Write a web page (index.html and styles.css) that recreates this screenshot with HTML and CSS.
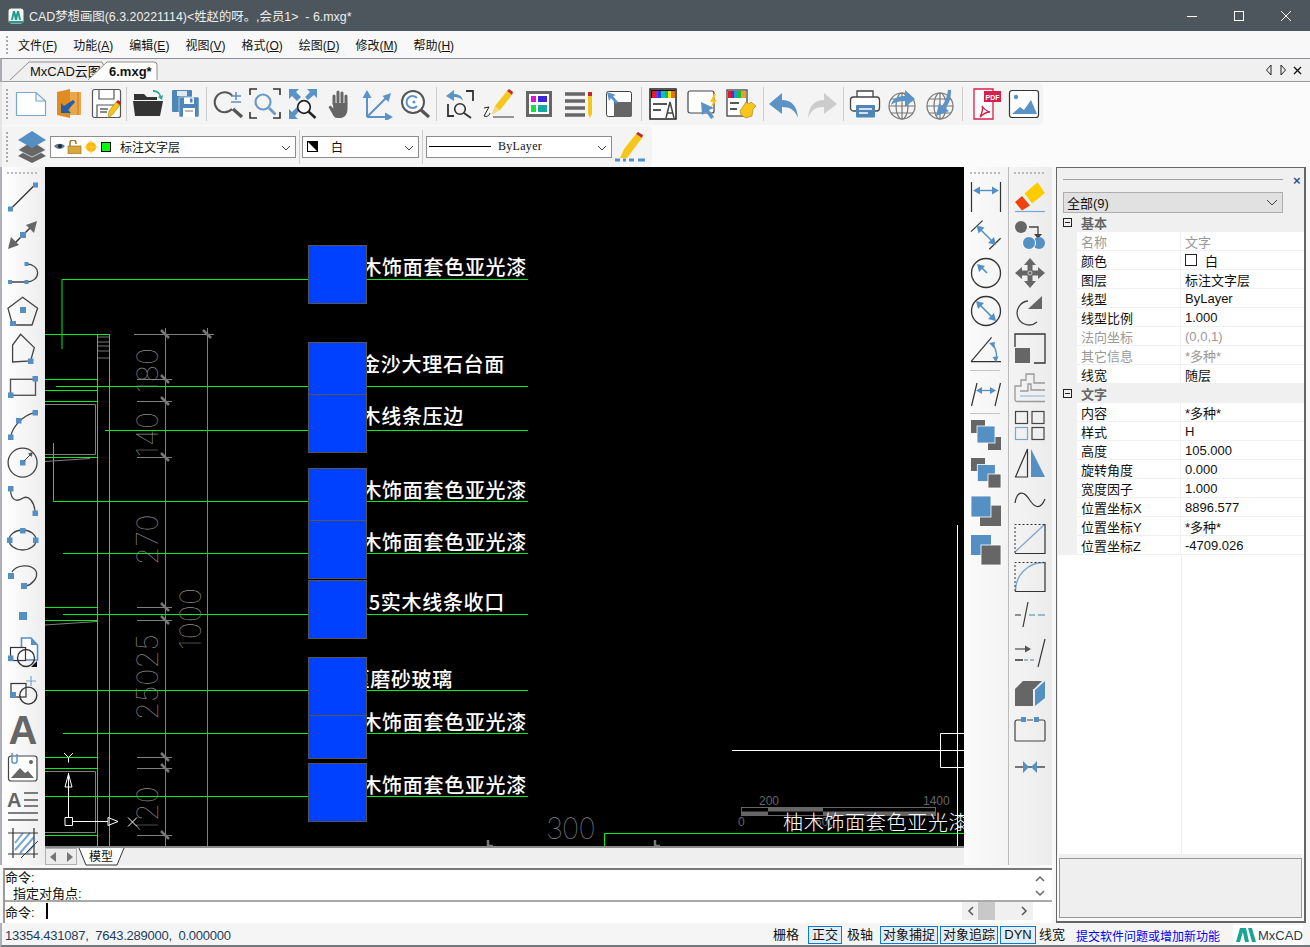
FILE: index.html
```html
<!DOCTYPE html>
<html lang="zh"><head><meta charset="utf-8"><title>CAD梦想画图</title><link rel="stylesheet" href="styles.css"></head>
<body>
<div class="app">
<header class="titlebar">
  <svg class="appicon" width="16" height="16" viewBox="0 0 16 16"><rect x=".5" y=".5" width="15" height="15" rx="3" fill="#f4f6f4"/><path d="M3 12L5 3h2l1 4 1-4h2l2 9h-2l-1-5-1 5H7L6 7l-1 5z" fill="#1e9c8c"/><path d="M1 13h14v2H1z" fill="#1e9c8c"/></svg>
  <span class="titletext">CAD梦想画图(6.3.20221114)&lt;姓赵的呀。,会员1&gt;  - 6.mxg*</span>
  <div class="winbtns">
    <svg width="12" height="12" viewBox="0 0 12 12"><path d="M1 6.500h10" stroke="#fff"/></svg>
    <svg width="12" height="12" viewBox="0 0 12 12"><rect x="1.500" y="1.500" width="9" height="9" fill="none" stroke="#fff"/></svg>
    <svg width="12" height="12" viewBox="0 0 12 12"><path d="M1 1l10 10M11 1L1 11" stroke="#fff" fill="none"/></svg>
  </div>
</header>
<nav class="menubar">
  <i class="vgrip"></i>
  <span>文件(<u>F</u>)</span><span>功能(<u>A</u>)</span><span>编辑(<u>E</u>)</span><span>视图(<u>V</u>)</span><span>格式(<u>O</u>)</span><span>绘图(<u>D</u>)</span><span>修改(<u>M</u>)</span><span>帮助(<u>H</u>)</span>
</nav>
<div class="tabstrip">
  <svg class="tabs" width="170" height="23" viewBox="0 0 170 23">
    <path d="M8 22L27 4H100L108 22" fill="#f0f0f0" stroke="#8f8f8f"/>
    <text x="28" y="18" class="tab-t">MxCAD云图</text>
    <path d="M86 22L105 4H152Q155 4 155 7V22" fill="#fff" stroke="#8f8f8f"/>
    <text x="107" y="18" class="tab-a">6.mxg*</text>
  </svg>
  <div class="tabnav">
    <svg width="8" height="12" viewBox="0 0 8 12"><path d="M6 1L1.500 6L6 11Z" fill="none" stroke="#222"/></svg>
    <svg width="8" height="12" viewBox="0 0 8 12"><path d="M2 1L6.500 6L2 11Z" fill="none" stroke="#222"/></svg>
    <svg width="9" height="12" viewBox="0 0 9 12"><path d="M1 3l7 7M8 3l-7 7" stroke="#111" stroke-width="1.300"/></svg>
  </div>
</div>
<section class="toolbars">
  <div class="tb tb1">
    <i class="vgrip"></i>
    <div class="grp g37">
      <span class="ic"><svg viewBox="0 0 32 32"><path d="M1.500 4.500H21L30.500 13V27.500H1.500Z M21 4.500V13H30.500" fill="#fff" stroke="#7aa6cf" stroke-width="1.200"/></svg></span>
      <span class="ic"><svg viewBox="0 0 32 32"><path d="M18 4H29V27H18Z" fill="#eaa64a"/><path d="M5 4L18 1V30L5 27Z" fill="#e08c24"/><path d="M26 4v23" stroke="#c97e20"/><path d="M21 12l2 2-7 8 3 3H9V15l3 3z" fill="#1d5fa8"/></svg></span>
      <span class="ic"><svg viewBox="0 0 32 32"><rect x="2.500" y="1.500" width="28" height="28" rx="2" fill="#fff" stroke="#555" stroke-width="1.200"/><path d="M9 2v9h15V2M7 30V17h17" fill="none" stroke="#555" stroke-width="1.200"/><path d="M10 21h8M10 24h7" stroke="#888" stroke-width="2"/><path d="M18 30l1-7 7-9 4 3-7 9z" fill="#f5c518" stroke="#8a7410" stroke-width=".5"/><path d="M26 14l2-2 3 2-1 3z" fill="#c82020"/></svg></span>
    </div><i class="sep"></i>
    <div class="grp g37">
      <span class="ic"><svg viewBox="0 0 32 32"><path d="M2 6h10l3 3h10v3H2z" fill="#333"/><path d="M1 13h30l-3 15H3z" fill="#333"/><path d="M21 2c4 0 7 2 8 6l2-1-1 5-4-3 1.500-.7C27 5 24 4 21 4z" fill="#2aa6a0"/></svg></span>
      <span class="ic"><svg viewBox="0 0 32 32"><rect x="3" y="2" width="20" height="22" rx="1" fill="#4e86b8"/><rect x="8" y="3" width="10" height="5" fill="#dfe9f2"/><rect x="10" y="9" width="20" height="20" rx="1" fill="#4e86b8" stroke="#f4f4f4" stroke-width=".6"/><rect x="15" y="9.500" width="10" height="6.500" fill="#fff"/><rect x="21" y="10.500" width="2.500" height="4" fill="#4e86b8"/><rect x="14" y="20" width="12" height="9" fill="#fff"/><path d="M16 23h8" stroke="#777"/></svg></span>
    </div><i class="sep"></i>
    <div class="grp g37">
      <span class="ic"><svg viewBox="0 0 32 32"><path d="M20.500 8A10 10 0 1 0 20 21" fill="none" stroke="#555" stroke-width="2"/><path d="M21 21l9 8" stroke="#555" stroke-width="3.200"/><path d="M24 4v8M19 8h10M19 14h10" stroke="#5b93c7" stroke-width="1.600"/></svg></span>
      <span class="ic"><svg viewBox="0 0 32 32"><path d="M1 7V1h7M24 1h7v6M1 24v6h7M24 30h7v-6" fill="none" stroke="#333" stroke-width="1.600"/><circle cx="14" cy="14" r="7.500" fill="none" stroke="#6a9ccb" stroke-width="2.200"/><path d="M20 20l6.500 6.500" stroke="#6a9ccb" stroke-width="2.800"/></svg></span>
      <span class="ic"><svg viewBox="0 0 32 32"><path d="M2 1h10L9 4l5 5-4 4-5-5-3 3zM30 1H20l3 3-5 5 3 3 6-5 3 3zM2 31V21l3 3 5-5 3 3-5 6 3 3z" fill="#5b93c7"/><circle cx="17" cy="19" r="6.300" fill="#fff" stroke="#222" stroke-width="1.700"/><path d="M21.500 23.500l7 6.500" stroke="#222" stroke-width="2.400"/></svg></span>
      <span class="ic"><svg viewBox="0 0 32 32"><path d="M10 15V8M14 14V4M18 14V5M22 15V8" stroke="#666" stroke-width="3" stroke-linecap="round"/><path d="M8.500 15h15v6c0 5-3 9-7 9h-3c-3 0-4-2-5-4l-4-7 2-1.500 3 3z" fill="#666"/></svg></span>
      <span class="ic"><svg viewBox="0 0 32 32"><path d="M5 29V8M5 29H25M5 29L24 10" stroke="#5b93c7" stroke-width="2" fill="none"/><path d="M5 2l4.500 8h-9zM31 29l-8 4.500v-9zM29 5l-2.500 9-6-6z" fill="#5b93c7"/></svg></span>
      <span class="ic"><svg viewBox="0 0 32 32"><circle cx="14" cy="14" r="11" fill="#fff" stroke="#555" stroke-width="2"/><path d="M18 10a6 6 0 1 0 0 8" fill="none" stroke="#5b93c7" stroke-width="2"/><circle cx="15" cy="14" r="1.500" fill="#5b93c7"/><path d="M22 22l8 7" stroke="#555" stroke-width="3.200"/></svg></span>
    </div><i class="sep"></i>
    <div class="grp g40">
      <span class="ic"><svg viewBox="0 0 32 32"><path d="M3 8l8-6v4c5 0 8 2 9 7-2-3-5-4-9-4v4z" fill="#5b93c7"/><path d="M5 16v12h6M23 3h7v10" fill="none" stroke="#333" stroke-width="1.800"/><circle cx="17" cy="21" r="5.300" fill="none" stroke="#333" stroke-width="1.600"/><path d="M21 25l7 5" stroke="#333" stroke-width="2"/></svg></span>
      <span class="ic"><svg viewBox="0 0 32 32"><path d="M9 26l3-8L24 3l5 4-12 15z" fill="#f7c61a"/><path d="M24 3l2-2 4 3-1 3z" fill="#c62828"/><path d="M9 26l3-8 5 4z" fill="#f3d98a"/><path d="M10 29H31" stroke="#555" stroke-width="1.200"/><path d="M1 20l5-1-5 9c3 1 5 0 6-3" fill="none" stroke="#222"/></svg></span>
      <span class="ic"><svg viewBox="0 0 32 32"><rect x="3" y="3" width="26" height="26" fill="#666"/><rect x="6" y="6" width="20" height="20" fill="#fff"/><rect x="8" y="8" width="5" height="6" fill="#e010d0"/><rect x="15" y="8" width="9" height="6" fill="#3b24e0"/><rect x="8" y="17" width="5" height="7" fill="#14e03a"/><rect x="15" y="17" width="9" height="7" fill="#13a8a0"/></svg></span>
      <span class="ic"><svg viewBox="0 0 32 32"><path d="M2 6h20M2 13h20M2 20h20M2 27h20" stroke="#666" stroke-width="3.500"/><path d="M25 8h4v18l-2 4-2-4z" fill="#f7c61a"/><rect x="25" y="4" width="4" height="4" fill="#c62828"/></svg></span>
      <span class="ic"><svg viewBox="0 0 32 32"><rect x="3.500" y="3.500" width="25" height="25" rx="2" fill="#fff" stroke="#444"/><path d="M11 14h18v13a2 2 0 0 1-2 2H11z" fill="#666"/><path d="M4 4l9 3-3 1 5 6-2 2-5-6-2 3z" fill="#5b93c7"/></svg></span>
    </div><i class="sep"></i>
    <div class="grp g39">
      <span class="ic"><svg viewBox="0 0 32 32"><rect x="3" y="1" width="26" height="30" fill="#fff" stroke="#111" stroke-width="1.400"/><path d="M4 2h24v8H4z" fill="#111"/><path d="M5 3h3v7H5z" fill="#e51a1a"/><path d="M8 3h3v7H8z" fill="#a020d0"/><path d="M11 3h3v7h-3z" fill="#2040e0"/><path d="M14 3h4v7h-4z" fill="#12c0c0"/><path d="M18 3h3v7h-3z" fill="#18c030"/><path d="M21 3h3v7h-3z" fill="#e8e020"/><path d="M24 3h4v7h-4z" fill="#e87010"/><path d="M6 16h14M6 22h8" stroke="#555" stroke-width="2"/><path d="M23 14l-4 16M23 14l4 16M20 25h6" stroke="#444" stroke-width="1.500"/></svg></span>
      <span class="ic"><svg viewBox="0 0 32 32"><rect x="2" y="3" width="26" height="22" rx="2" fill="#fff" stroke="#444" stroke-width="1.200"/><path d="M28 6l-4 8h3l-3 7 7-9h-3l2-6z" fill="#f7c61a"/><path d="M15 14l13 6-5 2 5 7-3 2-5-7-4 3z" fill="#5b93c7"/></svg></span>
      <span class="ic"><svg viewBox="0 0 32 32"><rect x="2" y="2" width="20" height="26" fill="#fff" stroke="#333" stroke-width="1.200"/><path d="M3 3h3v7H3z" fill="#e51a1a"/><path d="M6 3h3v7H6z" fill="#7020d0"/><path d="M9 3h3v7H9z" fill="#18a0d0"/><path d="M12 3h4v7h-4z" fill="#18c030"/><path d="M16 3h5v7h-5z" fill="#e8a020"/><path d="M5 15h9M5 21h7" stroke="#555" stroke-width="2"/><path d="M15 23l6-9 3 2 2-2 5 4-3 3-1 7-6 2-5-3z" fill="#f7c61a" stroke="#9a7c10" stroke-width=".6"/></svg></span>
    </div><i class="sep"></i>
    <div class="grp g38">
      <span class="ic"><svg viewBox="0 0 32 32"><path d="M1 16L14 5v7c9 0 15 5 16 18-3-8-8-11-16-11v7z" fill="#5b93c7"/></svg></span>
      <span class="ic"><svg viewBox="0 0 32 32"><path d="M31 16L18 5v7C9 12 3 17 2 30c3-8 8-11 16-11v7z" fill="#ccc"/></svg></span>
    </div><i class="sep"></i>
    <div class="grp g38">
      <span class="ic"><svg viewBox="0 0 32 32"><path d="M8 9V3h16v6" fill="#fff" stroke="#444" stroke-width="1.300"/><rect x="1.500" y="9" width="29" height="14" rx="3" fill="#fff" stroke="#444" stroke-width="1.300"/><rect x="7" y="17" width="19" height="12.500" rx="1" fill="#4e86b8"/><path d="M10 21h13M10 25h9" stroke="#fff" stroke-width="1.400"/></svg></span>
      <span class="ic"><svg viewBox="0 0 32 32"><g fill="none" stroke="#777" stroke-width="1.200"><circle cx="15" cy="18" r="13"/><ellipse cx="15" cy="18" rx="6" ry="13"/><path d="M2 18h26M4 11h22M4 25h22M15 5v26"/></g><path d="M4 17C6 10 11 8 18 8V2l10 9-10 8v-6c-6 0-10 1-14 4z" fill="#5b93c7"/></svg></span>
      <span class="ic"><svg viewBox="0 0 32 32"><g fill="none" stroke="#777" stroke-width="1.200"><circle cx="15" cy="18" r="13"/><ellipse cx="15" cy="18" rx="6" ry="13"/><path d="M2 18h26M4 11h22M4 25h22M15 5v26"/></g><path d="M26 2C26 11 24 16 20 20l4 3-13 5 3-13 3 3c3-4 5-9 6-16z" fill="#5b93c7"/></svg></span>
    </div><i class="sep"></i>
    <div class="grp g39">
      <span class="ic"><svg viewBox="0 0 32 32"><path d="M5 1h19v30H5z" fill="#fff" stroke="#d81e4a" stroke-width="1.300"/><rect x="15" y="3" width="17" height="11" fill="#d81e4a"/><text x="16.500" y="12" class="pdf-t">PDF</text><path d="M11 29c2-4 3-9 2-11 2 3 4 5 8 6-4 0-7 2-10 5z" fill="none" stroke="#d81e4a" stroke-width="1.300"/></svg></span>
      <span class="ic"><svg viewBox="0 0 32 32"><rect x="1.500" y="2.500" width="29" height="27" rx="2.500" fill="#fff" stroke="#333" stroke-width="1.200"/><circle cx="8" cy="9" r="2.200" fill="#5b93c7"/><path d="M4 26l8-7 4 3 7-10 6 14z" fill="#5b93c7"/></svg></span>
    </div>
  </div>
  <div class="tb tb2">
    <i class="vgrip"></i>
    <svg class="layers" width="32" height="34" viewBox="0 0 32 34"><path d="M16 17l14 9-14 7-14-7z" fill="#666"/><path d="M16 11l14 9-14 7-14-7z" fill="#666" stroke="#f4f4f4" stroke-width=".7"/><path d="M16 1l14 9-14 8-14-8z" fill="#5590c5"/></svg>
    <div class="combo c-layer">
      <svg width="60" height="14" viewBox="0 0 60 14"><path d="M1 6c3-3 8-3 11 0-3 4-8 4-11 0z" fill="#5a7a96"/><circle cx="7" cy="6" r="2" fill="#223"/><rect x="15" y="6" width="13" height="8" fill="#d8a83c" stroke="#8a6a20" stroke-width=".6"/><path d="M17 6V3a3 3 0 0 1 6 0v1" fill="none" stroke="#a07a20" stroke-width="1.500"/><circle cx="38" cy="7" r="5" fill="#ffb400"/><path d="M38 0v14M31 7h14" stroke="#ffcf40"/><rect x="48.500" y="2.500" width="9" height="9" fill="#00ff00" stroke="#000"/></svg>
      <span class="c-text">标注文字层</span><svg class="chev" width="10" height="6" viewBox="0 0 10 6"><path d="M1 1l4 4 4-4" fill="none" stroke="#444"/></svg>
    </div><i class="sep sep2"></i>
    <div class="combo c-color">
      <svg width="11" height="11" viewBox="0 0 11 11"><rect x=".5" y=".5" width="10" height="10" fill="#fff" stroke="#000"/><path d="M0 0h11v11z" fill="#000"/></svg>
      <span class="c-text">白</span><svg class="chev" width="10" height="6" viewBox="0 0 10 6"><path d="M1 1l4 4 4-4" fill="none" stroke="#444"/></svg>
    </div><i class="sep sep3"></i>
    <div class="combo c-line">
      <i class="ltline"></i><span class="c-mono">ByLayer</span><svg class="chev" width="10" height="6" viewBox="0 0 10 6"><path d="M1 1l4 4 4-4" fill="none" stroke="#444"/></svg>
    </div>
    <svg class="pencil2" width="32" height="32" viewBox="0 0 32 32"><path d="M6 27l4-9L22 3l6 4-15 20z" fill="#f7c61a"/><path d="M22 3l2-2 5 3-1 3z" fill="#c62828"/><path d="M1 29h5M9 29h3M15 29h5M24 29h7" stroke="#5590c5" stroke-width="3"/></svg>
  </div>
</section>
<main class="body">
  <div class="leftcol">
    <div class="work">
      <aside class="tool-left">
        <i class="hgrip"></i>
        <span class="lic"><svg viewBox="0 0 32 32"><path d="M3.600 28L28 3.700" stroke="#333" stroke-width="1.300"/><rect x="26" y="1.500" width="5" height="5" fill="#5590c5"/><rect x="1" y="25.500" width="5" height="5" fill="#5590c5"/></svg></span>
        <span class="lic"><svg viewBox="0 0 32 32"><path d="M7 25L26 6" stroke="#333" stroke-width="1.500"/><path d="M30 2l-3 12-8-8zM1 30l3-12 8 8z" fill="#666"/><rect x="13" y="13" width="6" height="6" fill="#5590c5"/></svg></span>
        <span class="lic"><svg viewBox="0 0 32 32"><path d="M3 25H19.600C26 25 30.600 21 30.600 16S26 7 19.600 7" fill="none" stroke="#444" stroke-width="1.300"/><rect x="1" y="23" width="4" height="4" fill="#5590c5"/><rect x="17.500" y="23" width="4" height="4" fill="#5590c5"/><rect x="17.500" y="5" width="4" height="4" fill="#5590c5"/></svg></span>
        <span class="lic"><svg viewBox="0 0 32 32"><path d="M15.600 2.300L30.600 13.300L25 30H5.600L1 13.300Z" fill="none" stroke="#444" stroke-width="1.300"/><rect x="13" y="12" width="6" height="6" fill="#5590c5"/><rect x="3" y="26" width="6" height="5" fill="#5590c5"/></svg></span>
        <span class="lic"><svg viewBox="0 0 32 32"><path d="M13.600 1.300L27.300 14.600L23.600 28L5.600 29V12Z" fill="none" stroke="#444" stroke-width="1.300"/><rect x="21" y="25.500" width="5.500" height="5.500" fill="#5590c5"/></svg></span>
        <span class="lic"><svg viewBox="0 0 32 32"><rect x="3.500" y="8.300" width="25" height="16" fill="none" stroke="#555" stroke-width="1.400"/><rect x="25.500" y="5" width="5.500" height="5.500" fill="#5590c5"/><rect x="1" y="21.500" width="5.500" height="5.500" fill="#5590c5"/></svg></span>
        <span class="lic"><svg viewBox="0 0 32 32"><path d="M3.600 28C5 19 15 6 28 3.600" fill="none" stroke="#444" stroke-width="1.300"/><rect x="25.500" y="1" width="5.500" height="5.500" fill="#5590c5"/><rect x="9" y="9" width="5.500" height="5.500" fill="#5590c5"/><rect x="1" y="25.500" width="5.500" height="5.500" fill="#5590c5"/></svg></span>
        <span class="lic"><svg viewBox="0 0 32 32"><circle cx="15.600" cy="15.600" r="14.500" fill="none" stroke="#444" stroke-width="1.300"/><rect x="13" y="13" width="5.500" height="5.500" fill="#5590c5"/><path d="M17 14l7-7" stroke="#444"/><path d="M26 5l-1.500 5-3.500-3.500z" fill="#555"/></svg></span>
        <span class="lic"><svg viewBox="0 0 32 32"><path d="M3.600 5C4 18 12 16 16 13C22 10 27 17 28 26" fill="none" stroke="#444" stroke-width="1.300"/><rect x="1" y="1" width="5.500" height="5.500" fill="#5590c5"/><rect x="25.500" y="25.500" width="5.500" height="5.500" fill="#5590c5"/></svg></span>
        <span class="lic"><svg viewBox="0 0 32 32"><ellipse cx="15.600" cy="17" rx="13.500" ry="10" fill="none" stroke="#444" stroke-width="1.300"/><rect x="13" y="5" width="5.500" height="5.500" fill="#5590c5"/><rect x="0" y="14.500" width="5.500" height="5.500" fill="#5590c5"/><rect x="26" y="14.500" width="5.500" height="5.500" fill="#5590c5"/></svg></span>
        <span class="lic"><svg viewBox="0 0 32 32"><path d="M5 11C9 4 24 2 29 10C32 17 24 24 19 25" fill="none" stroke="#444" stroke-width="1.300"/><rect x="1" y="12" width="6" height="6" fill="#5590c5"/><rect x="14" y="22" width="6" height="6" fill="#5590c5"/></svg></span>
        <span class="lic"><svg viewBox="0 0 32 32"><rect x="12" y="13" width="8" height="8" fill="#5590c5"/></svg></span>
        <span class="lic"><svg viewBox="0 0 32 32"><path d="M14.500 1H24l6.500 7v15h-16z" fill="#fff" stroke="#5590c5" stroke-width="1.600"/><path d="M24 1v7h6.500z" fill="#5590c5"/><rect x="3.500" y="10.500" width="15" height="13" fill="#fff" stroke="#333" stroke-width="1.200"/><circle cx="19" cy="21" r="8.500" fill="none" stroke="#333" stroke-width="1.400"/><rect x="1" y="18.500" width="5.500" height="5.500" fill="#5590c5"/><path d="M24 30l6-6v6z" fill="#111"/></svg></span>
        <span class="lic"><svg viewBox="0 0 32 32"><rect x="4" y="8.500" width="15" height="13.500" fill="none" stroke="#333" stroke-width="1.200"/><circle cx="21.300" cy="20.600" r="8.500" fill="none" stroke="#333" stroke-width="1.400"/><rect x="3" y="17" width="6" height="6" fill="#5590c5"/><path d="M24 1v10M19 6h10" stroke="#7aa6cf" stroke-width="1.200"/></svg></span>
        <span class="lic"><svg viewBox="0 0 32 32"><text x="16" y="31" class="big-a">A</text></svg></span>
        <span class="lic"><svg viewBox="0 0 32 32"><rect x="1.500" y="5" width="28.500" height="25" rx="2.500" fill="#fff" stroke="#444" stroke-width="1.200"/><path d="M4 27l9-10 5 5 3-2 6 7z" fill="#666"/><circle cx="24" cy="11" r="2" fill="#666"/><path d="M5 2v8c0 3 5 3 5 0V3" fill="none" stroke="#5590c5" stroke-width="1.400"/></svg></span>
        <span class="lic"><svg viewBox="0 0 32 32"><text x="0" y="18" class="mid-a">A</text><path d="M17 4h14M17 11h14M17 17h14M1 24h30M1 31h30" stroke="#555" stroke-width="1.400"/></svg></span>
        <span class="lic"><svg viewBox="0 0 32 32"><path d="M7 5h20v22H7z" fill="#fff"/><path d="M8 16l8-10M8 23l15-17M13 26l14-16M20 26l7-8" stroke="#7aa6cf" stroke-width="2"/><path d="M1 6h30M1 27h30M6 1v30M27 1v30" stroke="#333" stroke-width="1.200"/><path d="M14 31L31 14" stroke="#333"/></svg></span>
      </aside>
      <div class="canvaswrap">
        <svg class="cad" width="919" height="679" viewBox="45 167 919 679" aria-label="CAD drawing">
          <g class="green">
            <path d="M62 349V279.500H528M45 334.500H109M97.500 334V846M109.500 334V846M45 379.500H97M56 386.500H528M45 390.500H97M45 401.500H97M105 430.500H528M45 457.500H97M53.500 443V501.500H528M63 553.500H528M45 607.500H97M63 614.500H528M45 620.500H97M45 690.500H528M63 733.500H528M45 757.500H97M45 768.500H97M45 796.500H528M45 835.500H97M604.500 846V833.500H964"/>
            <path d="M98 337h11M98 342h11M98 346h11M98 351h11M98 358h11" class="thin"/>
          </g>
          <g class="gray">
            <path d="M165.500 328V846M207.500 328V846M134 334.500H214M137 379.500H172M137 401.500H172M137 457.500H172M137 607.500H172M137 620.500H172M137 757.500H172M137 768.500H172M137 835.500H172M45 404.500H95.500V454.500H45M45 771.500H95.500V832.500H45M45 461.500L90 458.500M45 625L97 621.500"/>
          </g>
          <g class="ticks">
            <path d="M161 330l8 8M203 330l8 8M161 375l8 8M161 397l8 8M161 453l8 8M161 603l8 8M161 616l8 8M161 753l8 8M161 764l8 8M161 831l8 8"/>
            <path d="M488 840v6h5M655 840v6h5"/>
          </g>
          <g class="dim">
            <text transform="translate(158,393) rotate(-90)">180</text>
            <text transform="translate(158,457) rotate(-90)">140</text>
            <text transform="translate(158,565) rotate(-90)">270</text>
            <text transform="translate(158,720) rotate(-90)">25025</text>
            <text transform="translate(158,832) rotate(-90)">120</text>
            <text transform="translate(201,650) rotate(-90)">1000</text>
            <text x="546" y="839" class="d300">300</text>
          </g>
          <g class="label">
            <text x="527" y="275">柚木饰面套色亚光漆</text>
            <text x="505" y="372">金沙大理石台面</text>
            <text x="464" y="424">实木线条压边</text>
            <text x="527" y="498">柚木饰面套色亚光漆</text>
            <text x="527" y="550">柚木饰面套色亚光漆</text>
            <text x="505" y="610">25实木线条收口</text>
            <text x="453" y="687">厘磨砂玻璃</text>
            <text x="527" y="730">柚木饰面套色亚光漆</text>
            <text x="527" y="793">柚木饰面套色亚光漆</text>
          </g>
          <g class="blue">
            <rect x="308.500" y="245.500" width="58" height="58"/>
            <rect x="308.500" y="342.500" width="58" height="58"/>
            <rect x="308.500" y="394.500" width="58" height="58"/>
            <rect x="308.500" y="468.500" width="58" height="58"/>
            <rect x="308.500" y="520.500" width="58" height="58"/>
            <rect x="308.500" y="580.500" width="58" height="58"/>
            <rect x="308.500" y="700.500" width="58" height="58"/>
            <rect x="308.500" y="657.500" width="58" height="58"/>
            <rect x="308.500" y="763.500" width="58" height="58"/>
          </g>
          <g class="white">
            <path d="M732 750.500H964M940.500 733.500V767.500H964M940.500 733.500H964M957.500 525V846"/>
            <path d="M68.500 817V773M72 821.500H108M65 817.500h7.500v8H65z"/>
            <path d="M65 787h7l-3.500-13zM108 817.500v8l10-4z"/>
            <path d="M64 753l4.500 4.500v5M73 753l-4.500 4.500M128 817.500l9 9M137 817.500l-9 9"/>
          </g>
          <g class="scale">
            <rect x="741.500" y="807.500" width="194" height="8"/>
            <path d="M741 811.500h27v4h-27zM768 807.500h55v4h-55zM823 811.500h112v4H823z" class="fill"/>
            <text x="759" y="805">200</text><text x="923" y="805">1400</text><text x="738" y="826">0</text><text x="815" y="826">600</text>
          </g>
          <text x="783" y="830" class="label2">柚木饰面套色亚光漆</text>
        </svg>
        <div class="modelbar">
          <div class="navbtns">
            <svg width="15" height="16" viewBox="0 0 15 16"><path d="M10 3v10L4 8z" fill="#777"/></svg><svg width="15" height="16" viewBox="0 0 15 16"><path d="M5 3v10l6-5z" fill="#777"/></svg>
          </div>
          <svg class="modeltab" width="50" height="19" viewBox="0 0 50 19"><path d="M1 0L8 17H39L46 0" fill="#fff" stroke="#333"/><text x="11" y="13" class="model-t">模型</text></svg>
        </div>
      </div>
      <aside class="tool-right">
        <div class="rcol">
          <i class="hgrip"></i>
          <span class="lic"><svg viewBox="0 0 32 32"><path d="M1.500 1v30M30.500 1v30" stroke="#333" stroke-width="1.200"/><path d="M7 9.500h18" stroke="#5590c5" stroke-width="1.400"/><path d="M3 9.500l7-4v8zM29 9.500l-7-4v8z" fill="#5590c5"/></svg></span>
          <span class="lic"><svg viewBox="0 0 32 32"><path d="M1 12.600L12.600 1.600M19.300 30.300L30.600 19.300" stroke="#333" stroke-width="1.200"/><path d="M10 10l13 13" stroke="#5590c5" stroke-width="1.500"/><path d="M6.500 6.500l8 2-6 6zM26 26l-8-2 6-6z" fill="#5590c5"/></svg></span>
          <span class="lic"><svg viewBox="0 0 32 32"><circle cx="16" cy="16" r="14.500" fill="none" stroke="#333" stroke-width="1.300"/><path d="M17 16l-7-7" stroke="#5590c5" stroke-width="1.700"/><path d="M7 7l8 2-6 6z" fill="#5590c5"/></svg></span>
          <span class="lic"><svg viewBox="0 0 32 32"><circle cx="16" cy="16" r="14.500" fill="none" stroke="#333" stroke-width="1.300"/><path d="M9 9l14 14" stroke="#5590c5" stroke-width="1.700"/><path d="M6 6l8 2-6 6zM26 26l-8-2 6-6z" fill="#5590c5"/></svg></span>
          <span class="lic"><svg viewBox="0 0 32 32"><path d="M1 28.600H31M1 28.600L21.600 4.400" fill="none" stroke="#333" stroke-width="1.200"/><path d="M22 10c3 4 5 8 4.500 15" fill="none" stroke="#5590c5" stroke-width="1.300"/><path d="M19 10l6-1-1 6zM26 29l-3.500-5 6-.5z" fill="#5590c5"/></svg></span>
          <i class="hsep"></i>
          <span class="lic"><svg viewBox="0 0 32 32"><path d="M1.500 30L7 7M25 30L30.500 7" stroke="#333" stroke-width="1.200"/><path d="M9 14.500h14" stroke="#5590c5" stroke-width="1.300"/><path d="M6 14.500l6-3.500v7zM26 14.500l-6-3.500v7z" fill="#5590c5"/></svg></span>
          <i class="hsep"></i>
          <span class="lic"><svg viewBox="0 0 32 32"><rect x="1" y="1" width="14" height="13" fill="#666"/><rect x="18" y="18" width="13" height="13" fill="#666"/><rect x="7" y="7" width="18" height="17" fill="#5590c5" stroke="#fff" stroke-width=".8"/></svg></span>
          <span class="lic"><svg viewBox="0 0 32 32"><rect x="1" y="1" width="14" height="13" fill="#666"/><rect x="7.300" y="7.600" width="18" height="17" fill="#5590c5" stroke="#fff" stroke-width=".8"/><rect x="18" y="17" width="13" height="14" fill="#666" stroke="#fff" stroke-width=".8"/></svg></span>
          <span class="lic"><svg viewBox="0 0 32 32"><rect x="10" y="10.600" width="21" height="20.400" fill="#666"/><rect x="1" y="1" width="20" height="21" fill="#5590c5" stroke="#fff" stroke-width=".8"/></svg></span>
          <span class="lic"><svg viewBox="0 0 32 32"><rect x="1" y="2" width="20" height="20" fill="#5590c5"/><rect x="11" y="12" width="20" height="20" fill="#666" stroke="#fff" stroke-width=".8"/></svg></span>
        </div>
        <div class="rcol rcol2">
          <i class="hgrip"></i>
          <span class="lic"><svg viewBox="0 0 32 32"><path d="M10.500 12.500L23.500 1.300L31 12L18 22.500Z" fill="#ffcc00"/><path d="M8 15L16 24.500L8 29.500L1 21Z" fill="#f0420c"/><path d="M1 30.500H31" stroke="#7aa6cf" stroke-width="1.200"/></svg></span>
          <span class="lic"><svg viewBox="0 0 32 32"><circle cx="7" cy="8" r="6" fill="#666"/><path d="M15 8h9v8" fill="none" stroke="#444" stroke-width="1.300"/><path d="M24 20l-4-5h8z" fill="#444"/><circle cx="25" cy="24" r="6" fill="#5590c5"/><circle cx="15" cy="24" r="6.500" fill="#5590c5" stroke="#fff"/></svg></span>
          <span class="lic"><svg viewBox="0 0 32 32"><path d="M16 1l6 7h-3.500v5.500H24V10l7 6-7 6v-3.500h-5.500V24H22l-6 7-6-7h3.500v-5.500H8V22l-7-6 7-6v3.500h5.500V8H10z" fill="#666"/><circle cx="16" cy="16" r="2" fill="none" stroke="#ccc"/></svg></span>
          <span class="lic"><svg viewBox="0 0 32 32"><path d="M23 27A12 12 0 1 1 14 6" fill="none" stroke="#444" stroke-width="1.300"/><path d="M28 1v13H14z" fill="#666"/></svg></span>
          <span class="lic"><svg viewBox="0 0 32 32"><path d="M1 14V1H31V30H20" fill="none" stroke="#333" stroke-width="1.300"/><rect x="1" y="15" width="15" height="15" fill="#666"/></svg></span>
          <span class="lic"><svg viewBox="0 0 32 32"><path d="M1 29V15h6V9h5V3h8v9h11M6 20h8v-7h3v6h14M1 29c0 1 1 1.500 2 1.500H31" fill="none" stroke="#999" stroke-width="1.300"/><path d="M6 25h25" stroke="#bcd0e4" stroke-width="2"/></svg></span>
          <span class="lic"><svg viewBox="0 0 32 32"><g fill="none" stroke-width="1.200"><rect x="1.500" y="2.500" width="12" height="12" stroke="#444"/><rect x="18" y="2.500" width="12" height="12" stroke="#444"/><rect x="1.500" y="18.500" width="12" height="12" stroke="#7aa6cf"/><rect x="18" y="18.500" width="12" height="12" stroke="#444"/></g></svg></span>
          <span class="lic"><svg viewBox="0 0 32 32"><path d="M1.500 30H13.500V2Z" fill="none" stroke="#333" stroke-width="1.200"/><path d="M17 2V30H31Z" fill="#5590c5"/></svg></span>
          <span class="lic"><svg viewBox="0 0 32 32"><path d="M1 18C3 5 10 6 15 14S26 26 31 14" fill="none" stroke="#333" stroke-width="1.200"/></svg></span>
          <span class="lic"><svg viewBox="0 0 32 32"><path d="M1 29L31 1" stroke="#7aa6cf" stroke-width="1.300"/><path d="M1 30.500H31V1" fill="none" stroke="#333" stroke-width="1.200"/><path d="M1 30V1.500H31" fill="none" stroke="#333" stroke-dasharray="2 2"/></svg></span>
          <span class="lic"><svg viewBox="0 0 32 32"><path d="M1.500 30C1.500 14 14 1.500 30 1.500" fill="none" stroke="#7aa6cf" stroke-width="1.300"/><path d="M1 30.500H31V1" fill="none" stroke="#333" stroke-width="1.200"/><path d="M1 30V1.500H31" fill="none" stroke="#333" stroke-dasharray="2 2"/></svg></span>
          <span class="lic"><svg viewBox="0 0 32 32"><path d="M1 16H7M9 28L14 3" stroke="#333" stroke-width="1.200"/><path d="M15 16h6M24 16h7" stroke="#7aa6cf" stroke-width="1.500"/></svg></span>
          <span class="lic"><svg viewBox="0 0 32 32"><path d="M1 12H15" stroke="#555" stroke-width="1.300"/><path d="M17 12l-6-3.500v7z" fill="#555"/><path d="M1 23h8" stroke="#333" stroke-width="1.500"/><path d="M10 23h12" stroke="#7aa6cf" stroke-width="1.500" stroke-dasharray="4 2"/><path d="M24 30L31 2" stroke="#333" stroke-width="1.200"/></svg></span>
          <span class="lic"><svg viewBox="0 0 32 32"><path d="M1 14L9 6H28L20 14Z" fill="#666"/><rect x="1" y="14" width="18" height="17" fill="#666"/><path d="M21 15L31 6V23L21 31Z" fill="#5590c5"/></svg></span>
          <span class="lic"><svg viewBox="0 0 32 32"><path d="M7 7H3a2 2 0 0 0-2 2V27a1 1 0 0 0 1 1H30a1 1 0 0 0 1-1V9a2 2 0 0 0-2-2H25M13 7h6" fill="none" stroke="#444" stroke-width="1.200"/><rect x="7" y="4" width="5" height="5" fill="#5590c5"/><rect x="20" y="4" width="5" height="5" fill="#5590c5"/></svg></span>
          <span class="lic"><svg viewBox="0 0 32 32"><path d="M1 16H31" stroke="#333" stroke-width="1.300"/><path d="M9 10v12l6-6zM23 10v12l-6-6z" fill="#5590c5"/></svg></span>
        </div>
      </aside>
    </div>
    <section class="cmd">
      <div class="cmdlog">
        <div class="cmdtext"><div>命令:</div><div class="ind">指定对角点:</div></div>
        <div class="vscroll">
          <svg width="12" height="8" viewBox="0 0 12 8"><path d="M2 6l4-4 4 4" fill="none" stroke="#666" stroke-width="1.500"/></svg>
          <svg width="12" height="8" viewBox="0 0 12 8"><path d="M2 2l4 4 4-4" fill="none" stroke="#666" stroke-width="1.500"/></svg>
        </div>
      </div>
      <div class="cmdinput">
        <span>命令:</span><i class="cursor"></i>
        <div class="hscroll">
          <svg width="10" height="10" viewBox="0 0 10 10"><path d="M7 1L3 5l4 4" fill="none" stroke="#555" stroke-width="1.500"/></svg>
          <i class="thumb"></i>
          <svg width="10" height="10" viewBox="0 0 10 10"><path d="M3 1l4 4-4 4" fill="none" stroke="#555" stroke-width="1.500"/></svg>
        </div>
      </div>
    </section>
  </div>
  <aside class="props">
    <div class="ptop"><i class="pline"></i><span class="pclose">×</span></div>
    <div class="pcombo"><span>全部(9)</span><svg width="12" height="7" viewBox="0 0 12 7"><path d="M1 1l5 5 5-5" fill="none" stroke="#444"/></svg></div>
    <div class="ptable">
      <div class="pgroup"><i class="minus"></i><span>基本</span></div>
      <div class="prow dis"><span class="k">名称</span><span class="v">文字</span></div>
      <div class="prow"><span class="k">颜色</span><span class="v"><i class="swatch"></i>白</span></div>
      <div class="prow"><span class="k">图层</span><span class="v">标注文字层</span></div>
      <div class="prow"><span class="k">线型</span><span class="v">ByLayer</span></div>
      <div class="prow"><span class="k">线型比例</span><span class="v">1.000</span></div>
      <div class="prow dis"><span class="k">法向坐标</span><span class="v">(0,0,1)</span></div>
      <div class="prow dis"><span class="k">其它信息</span><span class="v">*多种*</span></div>
      <div class="prow"><span class="k">线宽</span><span class="v">随层</span></div>
      <div class="pgroup"><i class="minus"></i><span>文字</span></div>
      <div class="prow"><span class="k">内容</span><span class="v">*多种*</span></div>
      <div class="prow"><span class="k">样式</span><span class="v">H</span></div>
      <div class="prow"><span class="k">高度</span><span class="v">105.000</span></div>
      <div class="prow"><span class="k">旋转角度</span><span class="v">0.000</span></div>
      <div class="prow"><span class="k">宽度因子</span><span class="v">1.000</span></div>
      <div class="prow"><span class="k">位置坐标X</span><span class="v">8896.577</span></div>
      <div class="prow"><span class="k">位置坐标Y</span><span class="v">*多种*</span></div>
      <div class="prow"><span class="k">位置坐标Z</span><span class="v">-4709.026</span></div>
      <div class="pfill"></div>
    </div>
    <div class="pdesc"><div class="pdescbox"></div></div>
  </aside>
</main>
<footer class="status">
  <span class="coords">13354.431087,&nbsp; 7643.289000,&nbsp; 0.000000</span>
  <span class="st st1">栅格</span>
  <span class="st on st2">正交</span>
  <span class="st st3">极轴</span>
  <span class="st on st4">对象捕捉</span>
  <span class="st on st5">对象追踪</span>
  <span class="st on st6">DYN</span>
  <span class="st st7">线宽</span>
  <span class="link">提交软件问题或增加新功能</span>
  <span class="brand"><svg width="20" height="16" viewBox="0 0 20 16"><path d="M0 15L4 1h4L4 15zM6 1h4l3 14H9zM12 1h4l4 14h-4z" fill="#1aa595"/></svg>MxCAD</span>
</footer>
</div>
</body></html>
```
FILE: styles.css
```css
* { box-sizing: border-box; }
html, body { margin: 0; padding: 0; }
body { font-family: "Liberation Sans", "Noto Sans CJK SC", sans-serif; font-size: 13px; color: #111; overflow: hidden; }
i { display: block; font-style: normal; }
svg { display: block; flex: none; }
.app { width: 1310px; height: 947px; display: flex; flex-direction: column; background: #f8f8f8; overflow: hidden; }

.titlebar { height: 31px; background: #4d565c; color: #eee; display: flex; align-items: center; padding-left: 8px; }
.appicon { margin-right: 5px; }
.titletext { font-size: 12.4px; white-space: pre; }
.winbtns { margin-left: auto; display: flex; gap: 35px; padding-right: 18px; }

.menubar { height: 27px; font-size: 12px; background: #f8f8f8; display: flex; align-items: center; padding-left: 6px; gap: 16px; }
.menubar .vgrip { height: 18px; margin-right: -6px; }
.menubar span { white-space: nowrap; }
.vgrip { width: 2px; height: 30px; background: repeating-linear-gradient(to bottom, #aaa 0 2px, transparent 2px 4px); }

.tabstrip { height: 24px; background: #f0f0f0; border-top: 1px solid #8c8c9c; border-bottom: 1px solid #9a9a9a; border-left: 2px solid #a9adb3; display: flex; align-items: flex-end; justify-content: space-between; }
.tab-t { font: 13px "Liberation Sans", "Noto Sans CJK SC", sans-serif; fill: #111; }
.tab-a { font: 700 13px "Liberation Sans", "Noto Sans CJK SC", sans-serif; fill: #111; }
.tabnav { display: flex; gap: 6px; align-self: center; padding-right: 8px; }

.toolbars { height: 85px; background: #fbfbfb; border-left: 2px solid #e4e4e4; }
.tb { display: flex; align-items: center; background: #f4f4f4; border-radius: 0 4px 4px 0; }
.tb1 { width: 1041px; height: 42px; margin-top: 1px; padding-left: 4px; }
.tb2 { width: 650px; height: 41px; margin-top: 1px; padding-left: 4px; }
.tb1 > .vgrip { margin-right: 4px; }
.grp { display: flex; }
.ic { display: flex; justify-content: center; }
.ic svg { width: 32px; height: 32px; }
.g37 .ic { width: 37.5px; }
.g38 .ic { width: 38px; }
.g39 .ic { width: 39px; }
.g40 .ic { width: 40px; }
.sep { width: 5px; height: 34px; background: linear-gradient(#ccc, #ccc) center / 1px 100% no-repeat; }
.sep2 { width: 6px; }
.sep3 { width: 7px; }
.layers { margin-left: 8px; margin-right: 2px; }
.combo { height: 22px; background: #fff; border: 1px solid #8d8d8d; display: flex; align-items: center; position: relative; padding-left: 2px; }
.chev { position: absolute; right: 4px; top: 8px; }
.c-layer { width: 246px; }
.c-text { margin-left: 7px; font-size: 12px; }
.c-color { width: 117px; padding-left: 4px; }
.c-color .c-text { margin-left: 13px; }
.c-line { width: 186px; }
.ltline { width: 62px; height: 1px; background: #000; margin-right: 7px; }
.c-mono { font: 12px "Liberation Serif", serif; letter-spacing: .3px; }
.pencil2 { margin-left: 2px; }

.body { height: 756px; display: flex; background: #f8f8f8; }
.leftcol { width: 1052px; display: flex; flex-direction: column; }
.work { height: 698px; display: flex; }

.tool-left { width: 45px; padding-top: 5px; background: linear-gradient(to right, #fff, #ededed); border-left: 2px solid #aeb2b8; padding-left: 5px; }
.lic { display: flex; height: 38px; align-items: center; }
.lic svg { width: 32px; height: 32px; overflow: visible; }
.hgrip { height: 2px; width: 30px; margin-bottom: 4px; background: repeating-linear-gradient(to right, #bbb 0 2px, transparent 2px 4px); }

.canvaswrap { width: 919px; display: flex; flex-direction: column; }
.cad { background: #000; font-family: "Noto Sans CJK SC", sans-serif; }
.green path { stroke: #00f020; stroke-width: 1; fill: none; }
.green .thin { stroke: #777; }
.gray path { stroke: #808080; stroke-width: 1; fill: none; }
.ticks path { stroke: #777; stroke-width: 2.500; fill: none; }
.dim text { font: 100 29px Inter, "Liberation Sans", sans-serif; fill: #8a8a8a; }
.dim .d300 { letter-spacing: -.8px; }
.label text { font: 500 20px "Noto Sans CJK SC", sans-serif; fill: #fff; text-anchor: end; letter-spacing: .7px; }
.label2 { font: 300 20px "Noto Sans CJK SC", sans-serif; fill: #fff; letter-spacing: .7px; }
.blue rect { fill: #0040ff; stroke: #555; stroke-width: 1; }
.white path { stroke: #fff; stroke-width: 1; fill: none; }
.scale rect { fill: none; stroke: #666; }
.scale .fill { fill: #666; }
.scale text { font: 12px "Liberation Sans", sans-serif; fill: #666; }
.modelbar { height: 19px; background: #efefef; border-top: 2px solid #8a8a8a; display: flex; }
.navbtns { width: 32px; height: 17px; display: flex; gap: 1px; background: #ececec; border: 1px solid #b0b0b0; padding-left: 0; }
.modeltab { margin-left: 1px; }
.model-t { font: 12px "Noto Sans CJK SC", sans-serif; fill: #111; }

.tool-right { width: 88px; display: flex; background: linear-gradient(to right, #fbfbfb, #ececec); }
.rcol { width: 44px; padding: 5px 0 0 6px; }
.rcol2 { border-left: 1px solid #bbb; padding-left: 5px; }
.hsep { width: 30px; height: 5px; background: linear-gradient(#c4c4c4, #c4c4c4) center / 100% 1px no-repeat; }

.cmd { margin-top: 3px; height: 55px; background: #fff; border-top: 2px solid #777; border-left: 2px solid #9a9a9a; margin-left: 3px; }
.cmdlog { height: 32px; display: flex; justify-content: space-between; border-bottom: 2px solid #aaa; }
.cmdtext { line-height: 16px; }
.ind { padding-left: 8px; }
.vscroll { width: 16px; margin-right: 4px; display: flex; flex-direction: column; gap: 6px; padding-top: 5px; align-items: center; }
.cmdinput { height: 21px; padding: 0 0 3px 0; display: flex; align-items: center; position: relative; }
.cursor { width: 2px; height: 16px; background: #000; margin-left: 11px; }
.hscroll { margin-left: auto; margin-right: 19px; width: 71px; height: 18px; background: #f0f0f0; display: flex; align-items: center; padding: 0 4px 0 4px; }
.thumb { width: 17px; height: 18px; background: #c8c8c8; margin-left: 2px; margin-right: auto; }

.props { width: 250px; margin-left: 4px; background: #f0f0f0; border: 1px solid #666; border-bottom-width: 2px; border-right-width: 2px; display: flex; flex-direction: column; }
.ptop { height: 24px; display: flex; align-items: center; padding: 0 3px 0 6px; }
.pline { width: 220px; height: 1px; background: #a0a0a0; margin-top: -2px; }
.pclose { margin-left: 10px; color: #2a5a90; font-weight: 700; font-size: 13px; line-height: 1; }
.pcombo { margin-left: 6px; width: 220px; height: 21px; background: #e1e1e1; border: 1px solid #adadad; display: flex; align-items: center; justify-content: space-between; padding: 0 4px 0 3px; }
.ptable { flex: 1; display: flex; flex-direction: column; margin-left: 1px; background: #fff; }
.pgroup { height: 19px; flex: none; background: #f0f0f0; display: flex; align-items: center; padding-left: 5px; color: #666; font-weight: 700; }
.minus { width: 9px; height: 9px; border: 1px solid #222; margin-right: 9px; background: linear-gradient(#222, #222) center / 5px 1px no-repeat; }
.prow { height: 19px; flex: none; display: flex; align-items: center; border-bottom: 1px solid #f0f0f0; border-left: 19px solid #f0f0f0; white-space: nowrap; }
.k { width: 104px; padding-left: 4px; border-right: 1px solid #f0f0f0; align-self: stretch; display: flex; align-items: center; }
.v { padding-left: 4px; display: flex; align-items: center; }
.dis { color: #999; }
.swatch { width: 12px; height: 12px; border: 1px solid #222; background: #fff; margin-right: 8px; }
.pfill { flex: 1; background: linear-gradient(#eee, #eee) 123px 0 / 1px 100% no-repeat; }
.pdesc { height: 67px; padding: 4px 2px 3px; background: #fafafa; }
.pdescbox { height: 100%; background: #efefef; border: 1px solid #999; box-shadow: 0 -4px 0 #efefef; }

.status { height: 24px; padding-top: 2px; background: #f5f5f5; border-bottom: 2px solid #72787d; border-left: 2px solid #aeb2b8; display: flex; align-items: center; position: relative; white-space: nowrap; }
.coords { font-size: 13px; color: #1d3c5c; padding-left: 3px; width: 770px; letter-spacing: -.25px; }
.st { height: 18px; line-height: 16px; border: 1px solid transparent; text-align: center; flex: none; }
.on { border-color: #0a7ad0; background: #e2edf6; }
.st1 { width: 26px; }
.st2 { width: 34px; margin-left: 10px; }
.st3 { width: 26px; margin-left: 4px; }
.st4 { width: 58px; margin-left: 8px; }
.st5 { width: 58px; margin-left: 2px; }
.st6 { width: 36px; margin-left: 2px; }
.st7 { width: 26px; margin-left: 2px; }
.link { color: #0000f0; font-size: 12px; margin-left: 12px; width: 145px; }
.brand { margin-left: 12px; width: 70px; height: 20px; background: #fff; display: flex; align-items: center; gap: 2px; font-size: 13px; color: #2a3a4a; padding-left: 3px; }

.pdf-t { font: 700 7px "Liberation Sans", sans-serif; fill: #fff; }
.big-a { font: 700 40px "Liberation Sans", sans-serif; fill: #666; text-anchor: middle; }
.mid-a { font: 700 20px "Liberation Sans", sans-serif; fill: #666; }
```
